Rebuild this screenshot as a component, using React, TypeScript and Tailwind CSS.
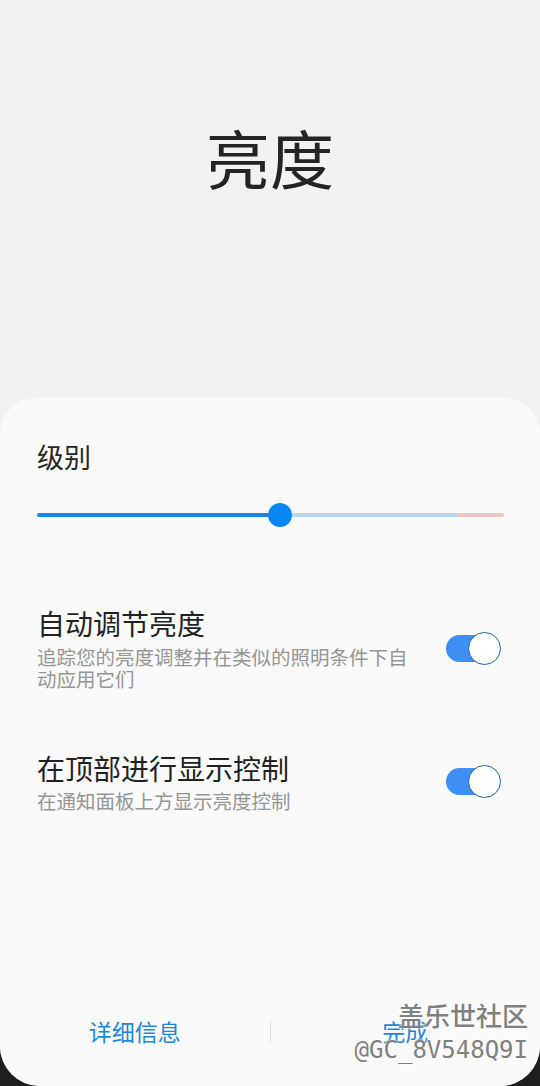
import React from "react";

const font = { fontFamily: '"Noto Sans CJK SC", "Noto Sans", sans-serif' };

function Toggle() {
  return (
    <div className="relative w-[55px] h-[33px] shrink-0 mr-[3px]">
      <div className="absolute left-0 top-[3px] w-[44px] h-[27px] rounded-full bg-[#3f8ef4]" />
      <div className="absolute right-0 top-0 w-[33px] h-[33px] rounded-full bg-white border-[1.5px] border-[#1f63a8]" />
    </div>
  );
}

export default function App() {
  return (
    <div className="w-full h-[1086px] bg-[#1e1e1e]" style={font}>
      <div className="relative h-full bg-[#f2f2f2] rounded-b-[40px] overflow-hidden flex flex-col">
        <div className="h-[398px] shrink-0 flex justify-center pt-[124px]">
          <h1 className="text-[64px] leading-none font-normal text-[#242424]">亮度</h1>
        </div>
        <div className="flex-1 bg-[#fafafa] rounded-t-[36px] flex flex-col">
          <div className="px-[37px] pr-[36px] flex flex-col">
            <div className="mt-[43px] text-[27px] leading-[32px] text-[#262626]">级别</div>
            <div className="relative mt-[30px] h-[24px] flex items-center">
              <div className="w-full h-[4px] flex rounded-full overflow-hidden">
                <div className="w-[243px] bg-[#1a88e2]" />
                <div className="flex-1 bg-[#b5d9f4]" />
                <div className="w-[46px] bg-[#f1c3c3]" />
              </div>
              <div className="absolute left-[231px] top-0 w-[24px] h-[24px] rounded-full bg-[#0a86f2]" />
            </div>
            <div className="mt-[79px] flex items-center">
              <div className="w-[376px]">
                <div className="text-[28px] leading-[34px] text-[#222]">自动调节亮度</div>
                <div className="mt-[6px] text-[19.5px] leading-[22px] text-[#959595]">
                  追踪您的亮度调整并在类似的照明条件下自动应用它们
                </div>
              </div>
              <div className="ml-auto">
                <Toggle />
              </div>
            </div>
            <div className="mt-[61px] flex items-center">
              <div className="w-[376px]">
                <div className="text-[28px] leading-[34px] text-[#222]">在顶部进行显示控制</div>
                <div className="mt-[5px] text-[19.5px] leading-[22px] text-[#959595]">
                  在通知面板上方显示亮度控制
                </div>
              </div>
              <div className="ml-auto">
                <Toggle />
              </div>
            </div>
          </div>
          <div className="mt-auto h-[56px] mb-[27px] flex items-center">
            <div className="flex-1 flex justify-center text-[23px] text-[#1f86d8]">详细信息</div>
            <div className="w-px h-[23px] bg-[#dddddd]" />
            <div className="flex-1 flex justify-center text-[23px] text-[#1f86d8]">完成</div>
          </div>
        </div>
        <div className="absolute right-[12px] bottom-[22px] flex flex-col items-end pointer-events-none">
          <div
            className="text-[26px] leading-[30px] font-medium text-[#808080]"
            style={{ textShadow: "0 0 2px #fff, 0 0 2px #fff" }}
          >
            盖乐世社区
          </div>
          <div
            className="text-[24px] leading-[28px] text-[#808080] mt-[6px]"
            style={{ fontFamily: '"DejaVu Sans Mono", monospace', textShadow: "0 0 2px #fff, 0 0 2px #fff" }}
          >
            @GC_8V548Q9I
          </div>
        </div>
      </div>
    </div>
  );
}
